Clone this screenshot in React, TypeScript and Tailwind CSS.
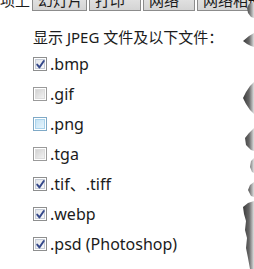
import React from "react";

type Kind = "checked" | "unchecked" | "hover";

function Box({ kind }: { kind: Kind }) {
  if (kind === "hover") {
    return (
      <div className="w-[14px] h-[14px] border border-[#7fa9c6] bg-white p-[1px] shrink-0">
        <div className="w-full h-full bg-gradient-to-br from-[#c4e2f4] to-[#e6f4fc] border border-[#a9d3ec]" />
      </div>
    );
  }
  if (kind === "unchecked") {
    return (
      <div className="w-[14px] h-[14px] border border-[#9a9a9a] bg-white p-[1px] shrink-0">
        <div className="w-full h-full bg-gradient-to-br from-[#d2d2d2] to-[#f2f2f2] border border-[#dcdcdc]" />
      </div>
    );
  }
  return (
    <div className="relative w-[14px] h-[14px] border border-[#8e8f8f] bg-white p-[1px] shrink-0">
      <div className="w-full h-full bg-gradient-to-br from-[#e4e6ea] to-[#f8f8f8] border border-[#c6ccd6]" />
      <svg className="absolute left-[1px] top-[1px]" width="11" height="11" viewBox="0 0 11 11">
        <path d="M2.2 5.6 L4.4 8.4 L8.8 2" fill="none" stroke="#34488a" strokeWidth="1.9" strokeLinecap="round" strokeLinejoin="round" />
      </svg>
    </div>
  );
}

const items: { label: string; kind: Kind }[] = [
  { label: ".bmp", kind: "checked" },
  { label: ".gif", kind: "unchecked" },
  { label: ".png", kind: "hover" },
  { label: ".tga", kind: "unchecked" },
  { label: ".tif、.tiff", kind: "checked" },
  { label: ".webp", kind: "checked" },
  { label: ".psd (Photoshop)", kind: "checked" },
];

const tabs = [
  { label: "幻灯片", w: "w-[55px]" },
  { label: "打印", w: "w-[52px]" },
  { label: "网络", w: "w-[52px]" },
  { label: "网络相册", w: "w-[70px]" },
];

export default function App() {
  return (
    <div
      className="relative w-[254px] h-[269px] overflow-hidden bg-white text-[#1b1b1b]"
      style={{ fontFamily: '"Noto Sans", "Noto Sans CJK SC", sans-serif' }}
    >
      {/* top tab strip, cropped */}
      <div className="h-[11px] overflow-hidden">
        <div className="flex items-end -mt-[11px] h-[22px] gap-[2px]">
          <div className="w-[30px] shrink-0 flex justify-end overflow-hidden">
            <span className="text-[15px] leading-[22px] whitespace-nowrap">选项上</span>
          </div>
          {tabs.map((t) => (
            <div
              key={t.label}
              className={`${t.w} h-[22px] shrink-0 border border-[#8c8c8c] bg-gradient-to-b from-[#ececec] to-[#d4d4d4] text-[15px] leading-[20px] pl-[5px] whitespace-nowrap overflow-hidden`}
            >
              {t.label}
            </div>
          ))}
        </div>
      </div>

      <div className="pl-[33px] pt-[16px] flex flex-col">
        <div className="text-[15px] leading-[20px] whitespace-nowrap">显示 JPEG 文件及以下文件：</div>
        <div className="flex flex-col mt-[2px]">
          {items.map((it) => (
            <div key={it.label} className="h-[30px] flex items-center gap-[3px]">
              <Box kind={it.kind} />
              <span className="text-[16px] leading-[20px] whitespace-nowrap">{it.label}</span>
            </div>
          ))}
        </div>
      </div>

      {/* torn edge decoration */}
      <svg className="absolute right-0 top-0" width="16" height="269" viewBox="238 0 16 269">
        <defs>
          <linearGradient id="tg" x1="0" x2="1" y1="0" y2="0">
            <stop offset="0" stopColor="#3a3a3a" />
            <stop offset="0.55" stopColor="#666666" />
            <stop offset="1" stopColor="#e0e0e0" />
          </linearGradient>
        </defs>
        <path
          fill="url(#tg)"
          d="M254 2 L249 4 L247 8 L248 13 L251 17 L254 18 Z
             M254 33 L249 36 L243 41 L247 44 L251 46 L254 47 Z
             M254 82 L250 86 L246 92 L243 98 L246 104 L250 110 L254 114 Z
             M254 128 L249 133 L245 138 L246 145 L251 150 L254 151 Z
             M254 158 L251 161 L250 167 L252 172 L254 173 Z
             M254 182 L250 185 L248 190 L251 196 L254 197 Z
             M254 201 L248 203 L243 207 L244 214 L246 221 L245 230 L247 238 L246 248 L248 258 L250 269 L254 269 Z"
        />
      </svg>
    </div>
  );
}
